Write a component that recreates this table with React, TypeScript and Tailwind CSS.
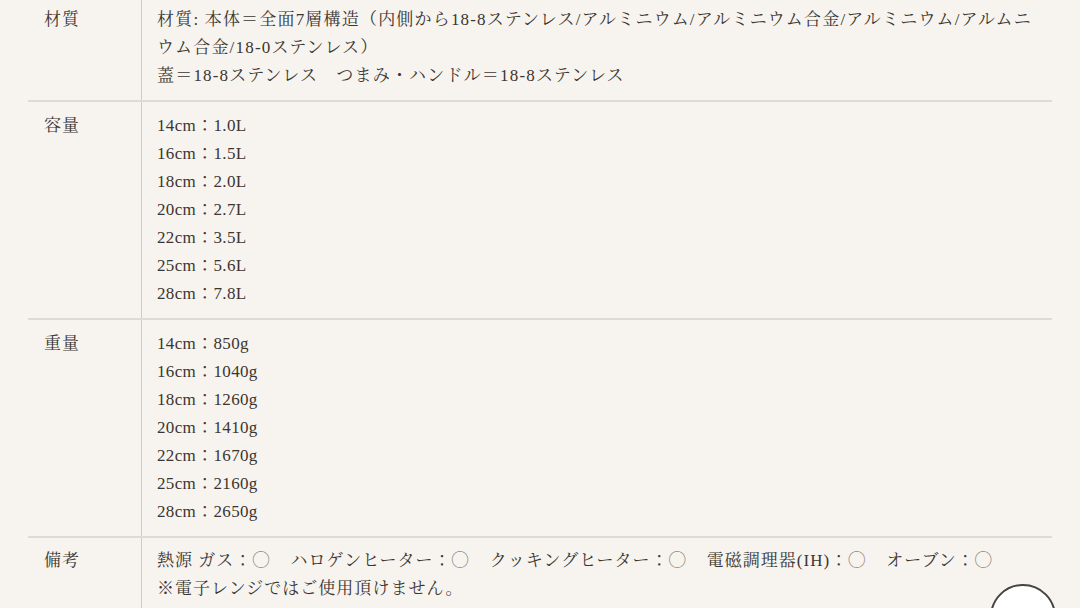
import React from 'react';

const font = { fontFamily: '"Liberation Serif", "Noto Serif CJK JP", "Noto Sans CJK JP", serif' };

const capacity = [
  ['14cm', '1.0L'],
  ['16cm', '1.5L'],
  ['18cm', '2.0L'],
  ['20cm', '2.7L'],
  ['22cm', '3.5L'],
  ['25cm', '5.6L'],
  ['28cm', '7.8L'],
];

const weight = [
  ['14cm', '850g'],
  ['16cm', '1040g'],
  ['18cm', '1260g'],
  ['20cm', '1410g'],
  ['22cm', '1670g'],
  ['25cm', '2160g'],
  ['28cm', '2650g'],
];

const heat = ['熱源 ガス', 'ハロゲンヒーター', 'クッキングヒーター', '電磁調理器(IH)', 'オーブン'];

function Row({ label, children, last, top }: { label: string; children: React.ReactNode; last?: boolean; top?: string }) {
  return (
    <div className={`grid grid-cols-[113px_1fr] ${last ? '' : 'border-b-2 border-[#dedad4]'}`}>
      <div className={`pl-4 ${top ?? 'pt-[10px]'} leading-[28px] tracking-[0.06em]`}>{label}</div>
      <div className={`border-l border-[#cfcac3] pl-[15px] ${top ?? 'pt-[10px]'} pb-[10px] leading-[28px]`}>{children}</div>
    </div>
  );
}

export default function App() {
  return (
    <div className="relative h-[608px] w-full overflow-hidden bg-[#f7f4ef] text-[#3b3631]" style={font}>
      <div className="-mt-1 px-7 text-[17px]">
        <Row label="材質">
          <div className="tracking-[0.07em]">
            <div>
              材質: 本体＝全面7層構造（内側から18-8ステンレス/アルミニウム/アルミニウム合金/アルミニウム/アルムニ
              <br />
              ウム合金/18-0ステンレス）
            </div>
            <div>蓋＝18-8ステンレス　つまみ・ハンドル＝18-8ステンレス</div>
          </div>
        </Row>
        <Row label="容量">
          {capacity.map(([s, v]) => (
            <div key={s} className="tracking-[0.02em]">
              {s}：{v}
            </div>
          ))}
        </Row>
        <Row label="重量">
          {weight.map(([s, v]) => (
            <div key={s} className="tracking-[0.02em]">
              {s}：{v}
            </div>
          ))}
        </Row>
        <Row label="備考" last top="pt-[9px]">
          <div className="tracking-[0.06em]">
            <div className="flex gap-x-[20px]">
              {heat.map((h) => (
                <span key={h}>
                  {h}：<span className="text-[#8c8781]">◯</span>
                </span>
              ))}
            </div>
            <div>※電子レンジではご使用頂けません。</div>
          </div>
        </Row>
      </div>
      <button className="absolute left-[990px] top-[584px] h-[66px] w-[66px] rounded-full border-2 border-[#474340] bg-white" />
    </div>
  );
}
